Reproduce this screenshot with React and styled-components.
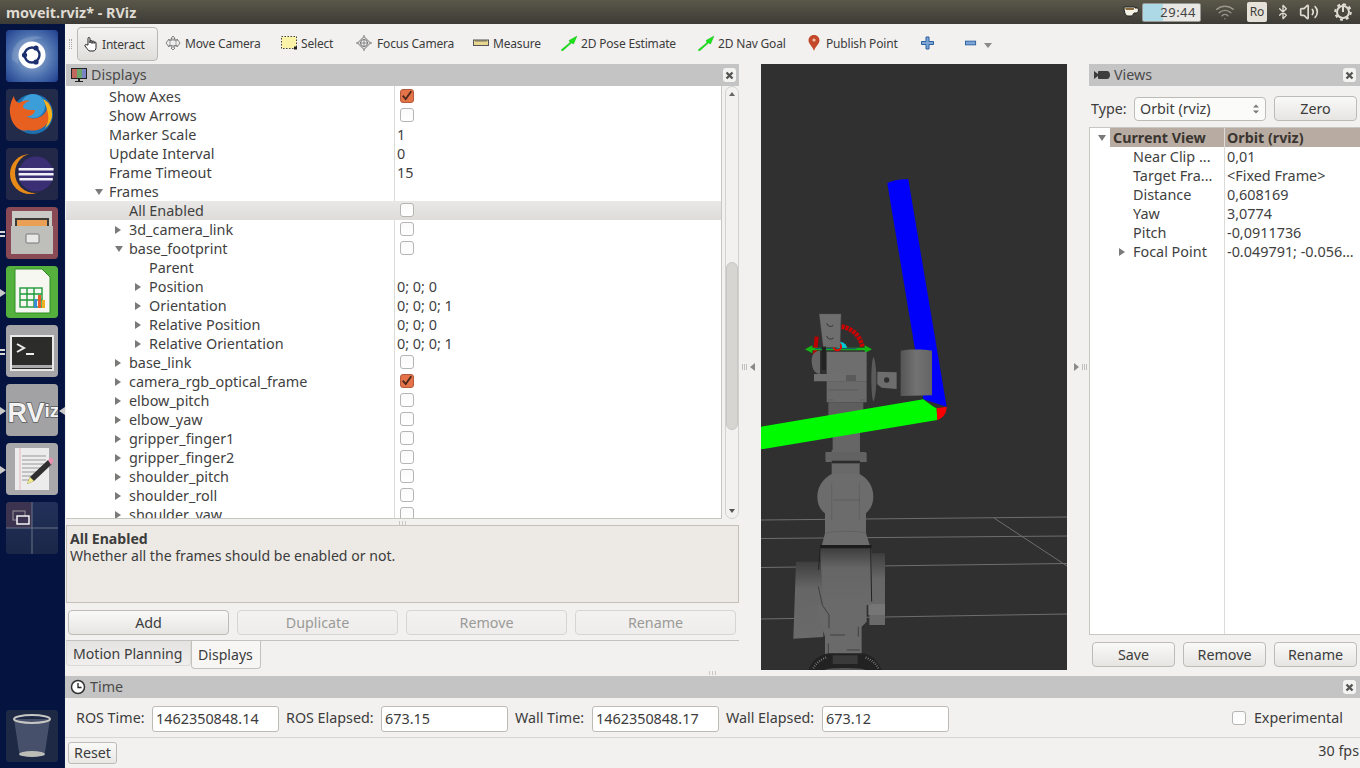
import React from "react";
import styled, { createGlobalStyle } from "styled-components";
import { Wifi, Bluetooth, Volume2 } from "lucide-react";

const Global = createGlobalStyle`
  * { box-sizing: border-box; }
  html, body { margin: 0; padding: 0; background: #f2f1ef; }
  body { font-family: "Noto Sans", "Open Sans", sans-serif; font-size: 14.3px; color: #3c3c3c; }
  #root { width: 1360px; height: 768px; overflow: hidden; }
`;

const Page = styled.div`width:1360px;height:768px;display:flex;flex-direction:column;overflow:hidden;`;
const TitleBar = styled.header`height:24px;flex:none;display:flex;align-items:center;padding:0 8px 0 6px;background:linear-gradient(#5b574a,#3c3b36);`;
const WindowTitle = styled.div`flex:1;font-weight:700;font-size:14.4px;color:#dfdbd2;`;
const Tray = styled.div`display:flex;align-items:center;color:#dfdbd2;`;
const Cup = styled.svg`width:16px;height:12px;margin-right:3px;`;
const TimerBox = styled.div`width:59px;height:19px;border-radius:2px;border:1px solid #9a9a94;background:linear-gradient(90deg,#add8e6 0 20px,#e9e8e4 20px);color:#444;font-size:13px;text-align:right;padding-right:4px;line-height:17px;letter-spacing:.5px;margin-right:14px;`;
const TrayGap = styled.div`display:flex;margin-right:${p=>p.$m}px;`;
const Kbd = styled.div`width:20px;height:20px;border-radius:2px;background:#e6e2da;color:#3c3b37;font-size:12px;line-height:20px;text-align:center;margin-right:8px;`;

const Body = styled.div`flex:1;display:flex;min-height:0;`;
const Launcher = styled.nav`width:65px;flex:none;display:flex;flex-direction:column;align-items:flex-start;padding:6px 0 6px 6px;gap:7px;background:#04133f;border-right:1px solid #0a1a40;`;
const TileWrap = styled.div`position:relative;width:52px;height:52px;`;
const Tile = styled.div`width:52px;height:52px;border-radius:4px;overflow:hidden;box-shadow:inset 0 0 0 1px rgba(255,255,255,.12);display:flex;`;
const Spacer = styled.div`flex:1;`;
const Pip = styled.svg`position:absolute;top:23px;left:${p=>p.$x}px;width:6px;height:8px;`;
const TileSvg = styled.svg`width:52px;height:52px;display:block;`;

const Main = styled.div`flex:1;display:flex;flex-direction:column;min-width:0;`;
const Toolbar = styled.div`height:40px;flex:none;display:flex;align-items:center;padding-left:4px;background:#f2f1ef;`;
const Grip = styled.div`width:3px;height:10px;margin-right:5px;border-left:1px dotted #aaa;border-right:1px dotted #aaa;`;
const ToolBtn = styled.div`width:${p=>p.$w}px;height:34px;flex:none;display:flex;align-items:center;gap:${p=>p.$gap ?? 4}px;font-size:12px;letter-spacing:-.18px;white-space:nowrap;color:#3c3c3c;padding-left:${p=>p.$pl||0}px;
  ${p=>p.$active ? `border:1px solid #b8b8b4;border-radius:4px;background:linear-gradient(#f4f3f1,#dfdedb);` : `padding-bottom:2px;`}`;
const ToolIcon = styled.svg`width:${p=>p.$s||16}px;height:16px;flex:none;`;

const Workspace = styled.div`flex:1;display:flex;min-height:0;`;
const Dock = styled.section`width:${p=>p.$w}px;flex:none;display:flex;flex-direction:column;padding-left:${p=>p.$pl||0}px;`;
const DockTitle = styled.div`height:22px;flex:none;display:flex;align-items:center;gap:4px;padding:0 0 2px 5px;background:#c4c4c4;color:#4a4a4a;font-size:14.3px;position:relative;`;
const CloseBtn = styled.div`position:absolute;right:${p=>p.$r}px;top:4px;width:13px;height:14px;border-radius:3px;background:#f3f3f1;display:flex;align-items:center;justify-content:center;`;
const Small = styled.svg`width:16px;height:16px;flex:none;margin-top:2px;`;

const TreeArea = styled.div`height:433px;flex:none;display:flex;position:relative;`;
const Tree = styled.div`width:657px;height:433px;overflow:hidden;background:#fff;padding-top:1px;border:1px solid #c8c6c0;border-width:0 1px 1px 0;position:relative;`;
const ColLine = styled.div`position:absolute;top:0;bottom:0;left:${p=>p.$x}px;width:1px;background:#dcdbd8;`;
const Row = styled.div`height:19px;display:flex;align-items:center;position:relative;font-size:14.4px;color:#3f3f3f;white-space:nowrap;line-height:19px;
  ${p=>p.$hl && `background:linear-gradient(#e9e8e6,#dedcd9);`}`;
const NameCell = styled.div`width:${p=>p.$w}px;flex:none;display:flex;align-items:center;position:relative;overflow:hidden;padding-left:${p=>p.$pl}px;`;
const ValCell = styled.div`flex:1;padding-left:3px;display:flex;align-items:center;min-width:0;`;
const Arrow = styled.span`position:absolute;top:6px;left:${p=>p.$x}px;width:0;height:0;border-style:solid;
  ${p=>p.$open ? `border-width:6px 4px 0 4px;border-color:#7a7a78 transparent transparent transparent;margin-top:1px;`
   : `border-width:4px 0 4px 6px;border-color:transparent transparent transparent #7a7a78;`}`;
const Check = styled.div`width:14px;height:14px;margin:-2px 0 0 ${p=>p.$ml ?? 3}px;border-radius:3px;border:1px solid ${p=>p.$on?"#b4593a":"#b5b5b3"};background:${p=>p.$on?"#e5734a":"linear-gradient(#fafafa,#fff)"};display:flex;align-items:center;justify-content:center;flex:none;`;
const Scroll = styled.div`width:14px;height:433px;margin-left:3px;border:1px solid #d2d1cd;border-radius:7px;position:relative;background:#f2f1ef;`;
const Thumb = styled.div`position:absolute;left:0;right:0;top:175px;height:168px;border-radius:6px;background:#d6d5d2;border:1px solid #c8c7c4;`;
const ScrollArrow = styled.span`position:absolute;left:3px;${p=>p.$up?"top:5px;border-width:0 3px 4px 3px;border-color:transparent transparent #666 transparent;":"bottom:5px;border-width:4px 3px 0 3px;border-color:#555 transparent transparent transparent;"}width:0;height:0;border-style:solid;`;
const Dots = styled.div`height:6px;flex:none;display:flex;justify-content:${p=>p.$j||"center"};gap:2px;align-items:flex-end;padding-right:${p=>p.$pad||0}px;`;
const Dot = styled.i`display:block;width:1px;height:4px;background:#c8c7c3;`;
const Desc = styled.div`height:78px;flex:none;border:1px solid #c4c1ba;background:#edeae5;padding:4px 3px;font-size:14.1px;line-height:18px;color:#3c3c3c;`;
const Bold = styled.div`font-weight:700;line-height:17px;`;
const BtnRow = styled.div`display:flex;gap:8px;flex:none;padding-left:${p=>p.$pl||0}px;margin-top:${p=>p.$mt||0}px;`;
const Btn = styled.div`width:${p=>p.$w}px;height:25px;flex:none;border:1px solid ${p=>p.$dis?"#d6d5d1":"#bdbbb6"};border-radius:4px;background:${p=>p.$dis?"linear-gradient(#f3f2f0,#eeedeb)":"linear-gradient(#f9f9f8,#e6e5e2)"};display:flex;align-items:center;justify-content:center;font-size:14.3px;color:${p=>p.$dis?"#9a9a98":"#3c3c3c"};`;
const HLine = styled.div`height:1px;flex:none;background:#c4c2bc;margin-top:${p=>p.$mt}px;`;
const Tabs = styled.div`display:flex;height:28px;flex:none;`;
const Tab = styled.div`display:flex;align-items:center;padding:0 6px;font-size:14.1px;color:#3c3c3c;width:${p=>p.$w}px;height:${p=>p.$active?28:25}px;border:1px solid ${p=>p.$active?"#c4c2bc":"#dcdad6"};border-top:0;border-radius:0 0 4px 4px;background:${p=>p.$active?"#f7f6f5":"linear-gradient(#e4e3e1,#f0efed)"};white-space:nowrap;`;

const Split = styled.div`width:22px;flex:none;position:relative;`;
const SplitArrow = styled.span`position:absolute;top:299px;left:${p=>p.$x}px;width:0;height:0;border-style:solid;border-width:4px ${p=>p.$dir==="l"?"5px 4px 0":"0 4px 5px"};border-color:transparent ${p=>p.$dir==="l"?"#8a8a88":"transparent"} transparent ${p=>p.$dir==="r"?"#8a8a88":"transparent"};`;
const SplitDots = styled.span`position:absolute;top:300px;left:${p=>p.$x}px;width:5px;height:6px;background:repeating-linear-gradient(90deg,#c0bfbb 0 1px,transparent 1px 2px);`;
const Viewport = styled.div`width:306px;height:606px;flex:none;background:#303030;overflow:hidden;`;
const Scene = styled.svg`width:306px;height:606px;display:block;`;

const TypeRow = styled.div`height:41px;flex:none;display:flex;align-items:center;padding:4px 0 0 2px;`;
const TypeLabel = styled.div`width:43px;`;
const Combo = styled.div`width:132px;height:24px;border:1px solid #bdbbb6;border-radius:4px;background:#fbfbfa;display:flex;align-items:center;justify-content:space-between;padding:0 5px;margin-right:8px;`;
const Spin = styled.svg`width:8px;height:14px;`;
const ViewsTree = styled.div`height:508px;flex:none;background:#fff;border:1px solid #c8c6c0;border-right:0;position:relative;overflow:hidden;`;
const HeadRow = styled.div`height:19px;display:flex;font-weight:700;font-size:14.3px;color:#3a3530;margin-left:20px;background:#b8aba2;line-height:19px;`;
const HeadCell = styled.div`width:${p=>p.$w}px;padding-left:3px;flex:none;`;
const ViewsBtns = styled(BtnRow)`margin-top:7px;padding-left:3px;`;

const TimeRow = styled.div`height:40px;flex:none;display:flex;align-items:center;padding:2px 17px 0 11px;border-bottom:1px solid #d8d6d2;`;
const TimeLabel = styled.div`width:${p=>p.$w}px;flex:none;white-space:nowrap;padding-bottom:2px;`;
const TimeInput = styled.div`width:127px;height:26px;flex:none;border:1px solid #bdbbb6;border-radius:3px;background:#fff;margin-right:7px;padding-left:3px;line-height:24px;font-size:14.4px;`;
const Grow = styled.div`flex:1;`;
const StatusBar = styled.div`height:30px;flex:none;display:flex;align-items:flex-start;justify-content:space-between;padding:4px 1px 0 3px;`;
const ResetBtn = styled.div`width:49px;height:22px;border:1px solid #bdbbb6;border-radius:3px;background:linear-gradient(#f9f9f8,#e9e8e5);text-align:center;line-height:20px;`;
const Fps = styled.div`margin-top:-1px;`;
const CheckLabel = styled.div`margin-left:8px;padding-bottom:2px;`;

const TickMark = () => (<svg width="14" height="14" viewBox="0 0 14 14"><path d="M2 6.500l3.500 4 6.500-9" stroke="#4a2a1c" strokeWidth="2.200" fill="none"/></svg>);
const X = () => (<svg width="9" height="9" viewBox="0 0 9 9"><path d="M1.500 1.500l6 6M7.500 1.500l-6 6" stroke="#555" strokeWidth="2.400"/></svg>);

const displayRows = [
  {n:"Show Axes",d:0,c:1},{n:"Show Arrows",d:0,c:0},{n:"Marker Scale",d:0,v:"1"},{n:"Update Interval",d:0,v:"0"},{n:"Frame Timeout",d:0,v:"15"},
  {n:"Frames",d:0,a:"o"},{n:"All Enabled",d:1,c:0,hl:1},{n:"3d_camera_link",d:1,a:"c",c:0},{n:"base_footprint",d:1,a:"o",c:0},{n:"Parent",d:2},
  {n:"Position",d:2,a:"c",v:"0; 0; 0"},{n:"Orientation",d:2,a:"c",v:"0; 0; 0; 1"},{n:"Relative Position",d:2,a:"c",v:"0; 0; 0"},{n:"Relative Orientation",d:2,a:"c",v:"0; 0; 0; 1"},
  {n:"base_link",d:1,a:"c",c:0},{n:"camera_rgb_optical_frame",d:1,a:"c",c:1},{n:"elbow_pitch",d:1,a:"c",c:0},{n:"elbow_yaw",d:1,a:"c",c:0},{n:"gripper_finger1",d:1,a:"c",c:0},{n:"gripper_finger2",d:1,a:"c",c:0},{n:"shoulder_pitch",d:1,a:"c",c:0},{n:"shoulder_roll",d:1,a:"c",c:0},{n:"shoulder_yaw",d:1,a:"c",c:0},
];
const viewRows = [
  {n:"Near Clip ...",v:"0,01"},{n:"Target Fra...",v:"<Fixed Frame>"},{n:"Distance",v:"0,608169"},{n:"Yaw",v:"3,0774"},{n:"Pitch",v:"-0,0911736"},{n:"Focal Point",v:"-0.049791; -0.056...",a:1},
];

const UbuntuIcon = () => (<TileSvg viewBox="0 0 52 52"><defs><radialGradient id="ub" cx=".5" cy=".5" r=".72"><stop offset="0" stopColor="#a8bedb"/><stop offset=".55" stopColor="#4f74b0"/><stop offset="1" stopColor="#1c3a8c"/></radialGradient></defs><rect width="52" height="52" fill="url(#ub)"/><path d="M6 30C4 12 22 2 38 8 26 8 14 14 12 34z" fill="#fff" opacity=".14"/><circle cx="26" cy="25" r="13.500" fill="#fff"/><circle cx="26" cy="25" r="7.500" fill="none" stroke="#1c2f6e" strokeWidth="2.400"/><circle cx="18.500" cy="25" r="2.600" fill="#1c2f6e"/><circle cx="30" cy="18" r="2.600" fill="#1c2f6e"/><circle cx="30" cy="32" r="2.600" fill="#1c2f6e"/></TileSvg>);
const FirefoxIcon = () => (<TileSvg viewBox="0 0 52 52"><rect width="52" height="52" fill="#232b4b"/><circle cx="27" cy="25" r="20" fill="#1d6fb0"/><circle cx="27" cy="17" r="12" fill="#3c9ed8"/><path d="M4 24C3 14 8 7 8 7c0 3 2 6 5 7 3-2 7-3 11-2-5 1-7 4-7 6 2 3 6 3 12 3 0 4-5 7-9 6 5 4 13 3 18-2 3-3 4-7 3-13 5 5 6 13 2 20-5 8-13 11-21 9C12 44 5 34 4 24z" fill="#e8601f"/><path d="M37 10c6 3 10 10 9 18-1 5-4 9-7 11 3-5 4-9 3-14-1-6-3-11-5-15z" fill="#f6b21a"/></TileSvg>);
const EclipseIcon = () => (<TileSvg viewBox="0 0 52 52"><rect width="52" height="52" fill="#232748"/><circle cx="24" cy="26" r="20" fill="#e88a17"/><circle cx="29" cy="25" r="20" fill="#232748"/><circle cx="30" cy="26" r="17.500" fill="#3a2e74"/><path d="M12.600 20h35v2.400h-35zM12.600 25h35v2.400h-35zM13.400 30h33.400v2.400H13.400z" fill="#f0eef6"/></TileSvg>);
const FilesIcon = () => (<TileSvg viewBox="0 0 52 52"><rect width="52" height="52" fill="#8a4a55"/><rect x="6" y="4" width="40" height="40" fill="#c9c9c6"/><rect x="9" y="11" width="34" height="14" fill="#3b3a38"/><rect x="11" y="13" width="30" height="6" fill="#e9a055"/><rect x="5" y="19" width="42" height="28" fill="#bebebb"/><rect x="20" y="27" width="13" height="9" rx="1" fill="#e8e8e6" stroke="#777"/></TileSvg>);
const CalcIcon = () => (<TileSvg viewBox="0 0 52 52"><rect width="52" height="52" fill="#55b13d"/><path d="M9 3h27l8 8v36H9z" fill="#f7f7f2" stroke="#2f8e24"/><g stroke="#1e9a3a" strokeWidth="1.400" fill="none"><rect x="14" y="22" width="22" height="19"/><path d="M14 28h22M14 34h22M21 22v19M28 22v19"/></g><rect x="28" y="33" width="3" height="9" fill="#3a8ed8"/><rect x="32" y="29" width="3" height="13" fill="#e85d2a"/><rect x="36" y="34" width="3" height="8" fill="#f2b01e"/></TileSvg>);
const TermIcon = () => (<TileSvg viewBox="0 0 52 52"><rect width="52" height="52" fill="#a5a5a7"/><rect x="4" y="10" width="44" height="36" fill="#e9e9e7"/><rect x="6" y="12" width="40" height="32" fill="#2c2c2b"/><rect x="6" y="40" width="40" height="3" fill="#aaa"/><path d="M11 19l7 4-7 4" stroke="#eee" strokeWidth="2" fill="none"/><path d="M20 29h8" stroke="#eee" strokeWidth="2"/></TileSvg>);
const RvizIcon = () => (<TileSvg viewBox="0 0 52 52"><rect width="52" height="52" fill="#a2a2a4"/><text x="1.500" y="38" fontFamily="Liberation Sans, sans-serif" fontWeight="700" fontSize="27" fill="#f2f2f2" stroke="#5a5a5a" strokeWidth="1.400" paintOrder="stroke">RV<tspan fontSize="19" dy="-5">iz</tspan></text></TileSvg>);
const EditIcon = () => (<TileSvg viewBox="0 0 52 52"><rect width="52" height="52" fill="#a8a8aa"/><rect x="9" y="5" width="34" height="42" fill="#ececec"/><path d="M14 5v42" stroke="#e8b8b8"/><path d="M16 13h24M16 17h24M16 21h22M16 25h20M16 29h14M16 33h10M16 37h8" stroke="#999"/><path d="M24 34L42 17l4 4-18 17-7 3z" fill="#2f2f2f"/><path d="M42 17l2-2c2-1 4 2 3 4l-2 3z" fill="#e890b0"/><path d="M24 34l4 4-7 3z" fill="#f0ea88"/></TileSvg>);
const SwitchIcon = () => (<TileSvg viewBox="0 0 52 52"><defs><linearGradient id="sw" x1="0" y1="0" x2="0" y2="1"><stop offset="0" stopColor="#22305a"/><stop offset="1" stopColor="#1b2747"/></linearGradient></defs><rect width="52" height="52" fill="url(#sw)"/><rect width="26" height="26" fill="#3b3350"/><path d="M26 0v52M0 26h52" stroke="#6a7288"/><rect x="7" y="9" width="12" height="9" fill="none" stroke="#999"/><rect x="11" y="14" width="12" height="8" fill="#3b3350" stroke="#fff" strokeWidth="1.400"/></TileSvg>);
const TrashIcon = () => (<TileSvg viewBox="0 0 52 52"><rect width="52" height="52" fill="#1e2945"/><path d="M8 9l5 33c0 2 6 4 13 4s13-2 13-4l5-33z" fill="#5c6680" opacity=".65"/><ellipse cx="26" cy="9" rx="18" ry="4" fill="none" stroke="#c6c6c2" strokeWidth="2"/><ellipse cx="26" cy="44" rx="13" ry="3" fill="#bdbdb8"/></TileSvg>);

const Triangle = ({x,flip}) => (<Pip $x={x} viewBox="0 0 6 8"><path d={flip?"M6 0v8L0 4z":"M0 0v8l6-4z"} fill="#c9c9c9"/></Pip>);
const Pips2 = () => (<Pip $x={-6} viewBox="0 0 6 8"><path d="M0 1h5v2H0zM0 5h5v2H0z" fill="#d8d8d8"/></Pip>);
const GreenArrow = () => (<ToolIcon viewBox="0 0 16 16"><path d="M0 15L9 7.500 8 5.500 16 1l-3.500 8-2-1L1.500 16z" fill="#19e619" stroke="#11a811" strokeWidth=".4"/></ToolIcon>);

const Z6 = "translate(760 160) scale(.3333)";
const Z7 = "translate(760 450) scale(.3333)";

const SceneArt = () => (
  <Scene viewBox="761 64 306 606">
    <defs>
      <linearGradient id="cyl" x1="0" x2="1"><stop offset="0" stopColor="#555"/><stop offset=".5" stopColor="#727272"/><stop offset="1" stopColor="#646464"/></linearGradient>
      <linearGradient id="drum" x1="0" x2="0" y1="0" y2="1"><stop offset="0" stopColor="#3e3e3e"/><stop offset=".35" stopColor="#666"/><stop offset="1" stopColor="#6a6a6a"/></linearGradient>
    </defs>
    <g stroke="#6e6e6e" strokeWidth="1" fill="none">
      <path d="M761 520L1067 517M761 538.500L1067 536M761 567.500L1067 563.500M761 619L1067 614M994 518L1067 566"/>
    </g>
    <g transform={Z7} fill="#6a6a6a">
      <path d="M215 0h85v8h20v28h-20v6h-85v-6h-18V8h18z" fill="#666"/>
      <path d="M215 40h84v40h-84z" fill="#696969"/>
      <path d="M215 32h85v8h-85z" fill="#2c2c2c"/>
      <path d="M215 72C190 85 172 110 172 140C172 165 182 180 195 190V250L185 288H330L318 250V190C332 178 340 160 340 140C340 110 325 85 298 72z" fill="#6c6c6c"/>
      <path d="M215 100v110M298 100v110M220 150h80M200 250c10-8 110-8 115 0" stroke="#4a4a4a" fill="none"/>
      <path d="M108 335h82v226l-90 5z" fill="url(#drum)"/>
      <path d="M328 310h47v215h-47z" fill="url(#drum)"/>
      <path d="M325 462h50v33h-50z" fill="#767676"/>
      <path d="M180 285h155v12H180z" fill="#1c1c1c"/>
      <path d="M180 295h155v170H190z" fill="url(#drum)"/>
      <path d="M180 295l-4 65M332 295l3 160" stroke="#222" strokeWidth="3" fill="none"/>
      <path d="M185 460h135v55l-15 15v110H195V560l-30-90z" fill="#6a6a6a"/>
      <path d="M175 410l12 55 20 30v40M210 555h45M295 530v30M205 580v30M260 600h40" stroke="#2c2c2c" strokeWidth="2" fill="none"/>
      <path d="M145 660c10-30 35-45 60-50h105c25 5 45 25 55 50z" fill="#222"/>
      <path d="M160 655c10-18 25-28 42-34M355 655c-8-15-20-26-42-34" stroke="#9a9a9a" strokeWidth="6" strokeDasharray="2 5" fill="none"/>
      <rect x="218" y="616" width="75" height="26" fill="#3a3a3a"/>
      <path d="M195 660c0-8 120-8 120 0z" fill="#555"/>
    </g>
    <g transform={Z6}>
      <path d="M218 790h82v110h-82z" fill="#666"/>
      <path d="M197 876h120v24H197z" fill="#626262"/>
      <path d="M200 665h120v62H200z" fill="#6a6a6a"/>
      <path d="M205 727h105v50H205z" fill="#5e5e5e"/>
      <path d="M382 70c15-10 45-13 63-12l115 682-70-22z" fill="#0000fa"/>
      <path d="M3 800L490 718c15 12 28 22 40 27l2 35L3 868z" fill="#00fa00"/>
      <path d="M530 745l30-5c0 15-6 32-28 40z" fill="#fa0000"/>
      <path d="M340 590c12 20 12 110 0 135c-8-20-8-115 0-135z" fill="#5a5a5a"/>
      <path d="M352 635l58 2v50l-45-4-13-10z" fill="#6d6d6d"/>
      <circle cx="380" cy="660" r="8" fill="#2e2e2e"/>
      <path d="M422 572c20-5 75-5 94 0v134l-94 2z" fill="url(#cyl)"/>
      <path d="M245 500c30 5 55 25 62 60" fill="none" stroke="#c00" strokeWidth="14" strokeDasharray="9 3"/>
      <path d="M170 530l-6 60" fill="none" stroke="#b00" strokeWidth="12"/>
      <path d="M240 545a24 24 0 0 1 22 25h-34z" fill="#00c8d6"/>
      <path d="M135 568l22-12v24zM336 568l-22-12v24z" fill="#13b513"/>
      <path d="M150 563h165v8H150z" fill="#14b814"/>
      <path d="M165 566h125" stroke="#1a1ab0" strokeWidth="2"/>
      <circle cx="232" cy="560" r="11" fill="none" stroke="#e00" strokeWidth="6"/>
      <path d="M178 462h65l-3 100h-50z" fill="#6e6e6e" stroke="#5a5a5a"/>
      <path d="M200 490a12 12 0 0 0 20 6M200 528a12 12 0 0 0 20 6" stroke="#333" strokeWidth="3" fill="none"/>
      <path d="M185 560h13v70h-13z" fill="#222"/>
      <path d="M155 600c0-15 8-28 25-28v70c-15 0-25-15-25-42z" fill="#666"/>
      <path d="M200 575h120v90H200z" fill="#6e6e6e"/>
      <path d="M162 642h125v22H162z" fill="#6f6f6f"/>
      <rect x="258" y="645" width="30" height="18" fill="#5a5a5a"/>
      <path d="M204 720h16M300 720h16M205 690h90" stroke="#444"/>
    </g>
  </Scene>
);

export default function App() {
  return (
    <Page>
      <Global/>
      <TitleBar>
        <WindowTitle>moveit.rviz* - RViz</WindowTitle>
        <Tray>
          <Cup viewBox="0 0 16 12"><path d="M1 1h11v1h2c2 0 2 5-1 5h-2c-1 2-2 3-3 3H5C3 10 1 7 1 1z" fill="#f4f2e4" stroke="#222"/><path d="M2 2h9c0 1 0 2-1 2H3z" fill="#8a6a3a"/></Cup>
          <TimerBox>29:44</TimerBox>
          <TrayGap $m={12}><Wifi size={20} strokeWidth={1.7} color="#9a968c"/></TrayGap>
          <Kbd>Ro</Kbd>
          <TrayGap $m={8}><Bluetooth size={16} strokeWidth={2}/></TrayGap>
          <TrayGap $m={15}><Volume2 size={20} strokeWidth={2}/></TrayGap>
          <TrayGap $m={0}>
            <svg width="18" height="18" viewBox="0 0 18 18"><circle cx="9" cy="9" r="6" fill="none" stroke="#dfdbd2" strokeWidth="2"/><circle cx="9" cy="9" r="7.800" fill="none" stroke="#dfdbd2" strokeWidth="2" strokeDasharray="3 3.100"/><path d="M9 1v8" stroke="#dfdbd2" strokeWidth="2"/></svg>
          </TrayGap>
        </Tray>
      </TitleBar>
      <Body>
        <Launcher>
          <TileWrap><Tile><UbuntuIcon/></Tile></TileWrap>
          <TileWrap><Tile><FirefoxIcon/></Tile></TileWrap>
          <TileWrap><Tile><EclipseIcon/></Tile></TileWrap>
          <TileWrap><Pips2/><Tile><FilesIcon/></Tile></TileWrap>
          <TileWrap><Triangle x={-6}/><Tile><CalcIcon/></Tile></TileWrap>
          <TileWrap><Pips2/><Tile><TermIcon/></Tile></TileWrap>
          <TileWrap><Triangle x={-6}/><Triangle x={53} flip/><Tile><RvizIcon/></Tile></TileWrap>
          <TileWrap><Triangle x={-6}/><Tile><EditIcon/></Tile></TileWrap>
          <TileWrap><Tile><SwitchIcon/></Tile></TileWrap>
          <Spacer/>
          <TileWrap><Tile><TrashIcon/></Tile></TileWrap>
        </Launcher>
        <Main>
          <Toolbar>
            <Grip/>
            <ToolBtn $active $w={81} $gap={2} $pl={4}>
              <ToolIcon viewBox="0 0 16 16" $s={18}><path d="M5 9V2.500a1 1 0 0 1 2 0V7V5.500a1 1 0 0 1 2 0V7.500V6a1 1 0 0 1 2 0v1.500V7a1 1 0 0 1 2 0v4.500c0 2-1 3.500-3 3.500H7c-1.500 0-2-1-3-2.500L2 10c-.5-1 .8-2 1.700-1.200z" fill="#fff" stroke="#222" strokeWidth="1"/></ToolIcon>
              Interact
            </ToolBtn>
            <ToolBtn $w={123} $pl={7}>
              <ToolIcon viewBox="0 0 16 16"><path d="M8 1l2 2.500H9V5h2.500l.5.500V4l3 4-3 4v-1.500H9V13h1l-2 2-2-2h1v-2.500H4V12L1 8l3-4v1.500L5 5h2V3.500H6z" fill="#eee" stroke="#666" strokeWidth=".8"/><rect x="5" y="5" width="6" height="6" fill="none" stroke="#888" strokeWidth=".8"/></ToolIcon>
              Move Camera
            </ToolBtn>
            <ToolBtn $w={75}>
              <ToolIcon viewBox="0 0 16 16"><rect x=".5" y="1.500" width="15" height="12" fill="#fbf3a8" stroke="#444" strokeDasharray="1.500 1.500"/><rect x="13" y="11.500" width="3" height="3" fill="#222"/></ToolIcon>
              Select
            </ToolBtn>
            <ToolBtn $w={117} $gap={5}>
              <ToolIcon viewBox="0 0 16 16"><path d="M8 0v16M0 8h16" stroke="#777"/><path d="M8 1.500L14.500 8 8 14.500 1.500 8z" fill="#ddd" stroke="#777"/><circle cx="8" cy="8" r="3.500" fill="#eee" stroke="#777"/><path d="M8 4v8M4 8h8" stroke="#777" strokeWidth=".8"/></ToolIcon>
              Focus Camera
            </ToolBtn>
            <ToolBtn $w={88}>
              <ToolIcon viewBox="0 0 16 16"><rect x=".5" y="5" width="15" height="5.500" fill="#e8d78e" stroke="#555"/><path d="M3 5v2M5 5v2M7 5v2M9 5v2M11 5v2M13 5v2" stroke="#555" strokeWidth=".8"/></ToolIcon>
              Measure
            </ToolBtn>
            <ToolBtn $w={137}><GreenArrow/>2D Pose Estimate</ToolBtn>
            <ToolBtn $w={110}><GreenArrow/>2D Nav Goal</ToolBtn>
            <ToolBtn $w={113} $gap={6}>
              <ToolIcon viewBox="0 0 12 16" $s={12}><path d="M6 0C2.500 0 .5 2.500.5 5.500C.5 9 4.500 11 6 16c1.500-5 5.500-7 5.500-10.500C11.500 2.500 9.500 0 6 0z" fill="#c4492b"/><circle cx="6" cy="5" r="1.600" fill="#f3c0a8"/></ToolIcon>
              Publish Point
            </ToolBtn>
            <ToolBtn $w={44}>
              <ToolIcon viewBox="0 0 13 13" $s={13}><path d="M5 .5h3v4.500h4.500v3H8v4.500H5V8H.5V5H5z" fill="#7ba6d6" stroke="#2e5f9e"/></ToolIcon>
            </ToolBtn>
            <ToolBtn $w={30} $gap={7}>
              <ToolIcon viewBox="0 0 13 13" $s={12}><rect x=".5" y="4.500" width="11" height="4" fill="#7ba6d6" stroke="#2e5f9e"/></ToolIcon>
              <ToolIcon viewBox="0 0 8 16" $s={8}><path d="M0 8h8l-4 5z" fill="#8a8a88"/></ToolIcon>
            </ToolBtn>
          </Toolbar>
          <Workspace>
            <Dock $w={674} $pl={1}>
              <DockTitle>
                <Small viewBox="0 0 16 16"><rect x="0" y="1" width="16" height="11" fill="#222"/><rect x="1" y="2" width="5" height="9" fill="#c0675e"/><rect x="6" y="2" width="5" height="9" fill="#6da66a"/><rect x="11" y="2" width="4" height="9" fill="#7a84c4"/><path d="M7 12h2v2h3v1H4v-1h3z" fill="#222"/></Small>
                Displays
                <CloseBtn $r={3}><X/></CloseBtn>
              </DockTitle>
              <TreeArea>
                <Tree>
                  <ColLine $x={328}/>
                  {displayRows.map((r,i)=>{
                    const pl = 43 + r.d*20;
                    return (
                      <Row key={i} $hl={r.hl}>
                        <NameCell $w={328} $pl={pl}>
                          {r.a && <Arrow $x={pl-14} $open={r.a==="o"}/>}
                          {r.n}
                        </NameCell>
                        <ValCell>
                          {r.v}
                          {r.c!==undefined && <Check $on={r.c}>{r.c?<TickMark/>:null}</Check>}
                        </ValCell>
                      </Row>
                    );
                  })}
                </Tree>
                <Scroll><ScrollArrow $up/><Thumb/><ScrollArrow/></Scroll>
              </TreeArea>
              <Dots><Dot/><Dot/><Dot/></Dots>
              <Desc><Bold>All Enabled</Bold>Whether all the frames should be enabled or not.</Desc>
              <BtnRow $mt={7} $pl={2}>
                <Btn $w={161}>Add</Btn>
                <Btn $w={161} $dis>Duplicate</Btn>
                <Btn $w={161} $dis>Remove</Btn>
                <Btn $w={161} $dis>Rename</Btn>
              </BtnRow>
              <HLine $mt={5}/>
              <Tabs>
                <Tab $w={125}>Motion Planning</Tab>
                <Tab $w={70} $active>Displays</Tab>
              </Tabs>
              <Dots $j="flex-end" $pad={23}><Dot/><Dot/><Dot/></Dots>
            </Dock>
            <Split><SplitDots $x={3}/><SplitArrow $x={11} $dir="l"/></Split>
            <Viewport><SceneArt/></Viewport>
            <Split><SplitArrow $x={7} $dir="r"/><SplitDots $x={15}/></Split>
            <Dock $w={271}>
              <DockTitle>
                <Small viewBox="0 0 16 16"><path d="M0 4l4 3V5c0-.5.500-1 1-1h8c2 0 3 2 3 4s-1 4-3 4H5c-.5 0-1-.5-1-1V9l-4 3z" fill="#3c3c3c"/></Small>
                Views
                <CloseBtn $r={4}><X/></CloseBtn>
              </DockTitle>
              <TypeRow>
                <TypeLabel>Type:</TypeLabel>
                <Combo>Orbit (rviz)<Spin viewBox="0 0 8 14"><path d="M1 5.500l3-3 3 3zM1 8.500l3 3 3-3z" fill="#777"/></Spin></Combo>
                <Btn $w={83}>Zero</Btn>
              </TypeRow>
              <ViewsTree>
                <ColLine $x={134}/>
                <Arrow $x={8} $open/>
                <HeadRow><HeadCell $w={114}>Current View</HeadCell><HeadCell $w={137}>Orbit (rviz)</HeadCell></HeadRow>
                {viewRows.map((r,i)=>(
                  <Row key={i}>
                    <NameCell $w={134} $pl={43}>{r.a && <Arrow $x={29}/>}{r.n}</NameCell>
                    <ValCell>{r.v}</ValCell>
                  </Row>
                ))}
              </ViewsTree>
              <ViewsBtns>
                <Btn $w={83}>Save</Btn>
                <Btn $w={83}>Remove</Btn>
                <Btn $w={83}>Rename</Btn>
              </ViewsBtns>
            </Dock>
          </Workspace>
          <DockTitle>
            <Small viewBox="0 0 16 16"><circle cx="8" cy="8" r="6.500" fill="#fff" stroke="#333" strokeWidth="1.500"/><path d="M8 4v4.500h3.500" stroke="#222" strokeWidth="1.300" fill="none"/></Small>
            Time
            <CloseBtn $r={4}><X/></CloseBtn>
          </DockTitle>
          <TimeRow>
            <TimeLabel $w={76}>ROS Time:</TimeLabel><TimeInput>1462350848.14</TimeInput>
            <TimeLabel $w={95}>ROS Elapsed:</TimeLabel><TimeInput>673.15</TimeInput>
            <TimeLabel $w={77}>Wall Time:</TimeLabel><TimeInput>1462350848.17</TimeInput>
            <TimeLabel $w={96}>Wall Elapsed:</TimeLabel><TimeInput>673.12</TimeInput>
            <Grow/>
            <Check $ml={0}/><CheckLabel>Experimental</CheckLabel>
          </TimeRow>
          <StatusBar>
            <ResetBtn>Reset</ResetBtn>
            <Fps>30 fps</Fps>
          </StatusBar>
        </Main>
      </Body>
    </Page>
  );
}
